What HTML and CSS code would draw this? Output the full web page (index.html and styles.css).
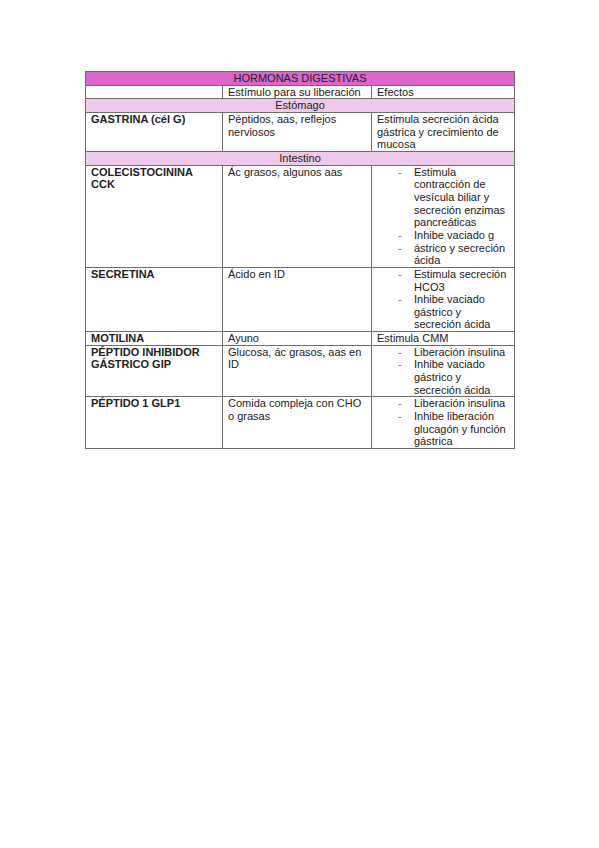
FILE: index.html
```html
<!DOCTYPE html>
<html lang="es">
<head>
<meta charset="utf-8">
<title>Hormonas digestivas</title>
<link rel="stylesheet" href="styles.css">
</head>
<body>
<main class="page">
<table class="hormones">
  <colgroup>
    <col class="c1"><col class="c2"><col class="c3">
  </colgroup>
  <tr class="title"><td colspan="3">HORMONAS DIGESTIVAS</td></tr>
  <tr><td></td><td>Estímulo para su liberación</td><td>Efectos</td></tr>
  <tr class="section"><td colspan="3">Estómago</td></tr>
  <tr class="r3">
    <th>GASTRINA (cél G)</th>
    <td>Péptidos, aas, reflejos<br>nerviosos</td>
    <td>Estimula secreción ácida<br>gástrica y crecimiento de<br>mucosa</td>
  </tr>
  <tr class="section"><td colspan="3">Intestino</td></tr>
  <tr>
    <th>COLECISTOCININA<br>CCK</th>
    <td>Ác grasos, algunos aas</td>
    <td><ul class="dash">
      <li><span>Estimula<br>contracción de<br>vesícula biliar y<br>secreción enzimas<br>pancreáticas</span></li>
      <li><span>Inhibe vaciado g</span></li>
      <li><span>ástrico y secreción<br>ácida</span></li>
    </ul></td>
  </tr>
  <tr>
    <th>SECRETINA</th>
    <td>Ácido en ID</td>
    <td><ul class="dash">
      <li><span>Estimula secreción<br>HCO3</span></li>
      <li><span>Inhibe vaciado<br>gástrico y<br>secreción ácida</span></li>
    </ul></td>
  </tr>
  <tr>
    <th>MOTILINA</th>
    <td>Ayuno</td>
    <td>Estimula CMM</td>
  </tr>
  <tr>
    <th>PÉPTIDO INHIBIDOR<br>GÁSTRICO GIP</th>
    <td>Glucosa, ác grasos, aas en<br>ID</td>
    <td><ul class="dash">
      <li><span>Liberación insulina</span></li>
      <li><span>Inhibe vaciado<br>gástrico y<br>secreción ácida</span></li>
    </ul></td>
  </tr>
  <tr>
    <th>PÉPTIDO 1 GLP1</th>
    <td>Comida compleja con CHO<br>o grasas</td>
    <td><ul class="dash">
      <li><span>Liberación insulina</span></li>
      <li><span>Inhibe liberación<br>glucagón y función<br>gástrica</span></li>
    </ul></td>
  </tr>
</table>
</main>
</body>
</html>
```

FILE: styles.css
```css
html, body {
  margin: 0;
  padding: 0;
  background: #ffffff;
}

.page {
  padding: 71px 0 0 85px;
}

.hormones {
  border-collapse: collapse;
  table-layout: fixed;
  width: 429px;
  font-family: "Liberation Sans", Arial, sans-serif;
  font-size: 11px;
  line-height: 12.65px;
  color: #222222;
}

.c1 { width: 137px; }
.c2 { width: 149px; }
.c3 { width: 143px; }

.hormones td,
.hormones th {
  border: 1px solid #6e6e6e;
  padding: 0 5px 0 5px;
  vertical-align: top;
  text-align: left;
  white-space: nowrap;
  overflow: visible;
}

.hormones th {
  font-weight: bold;
}

.title td {
  background: #d866cb;
  text-align: center;
}

.section td {
  background: #efc9ec;
  text-align: center;
}

.dash {
  list-style: none;
  margin: 0;
  padding: 0 0 0 21px;
}

.dash li {
  display: flex;
}

.dash li::before {
  content: "-";
  flex: 0 0 16px;
  width: 16px;
  color: #777777;
}
```
